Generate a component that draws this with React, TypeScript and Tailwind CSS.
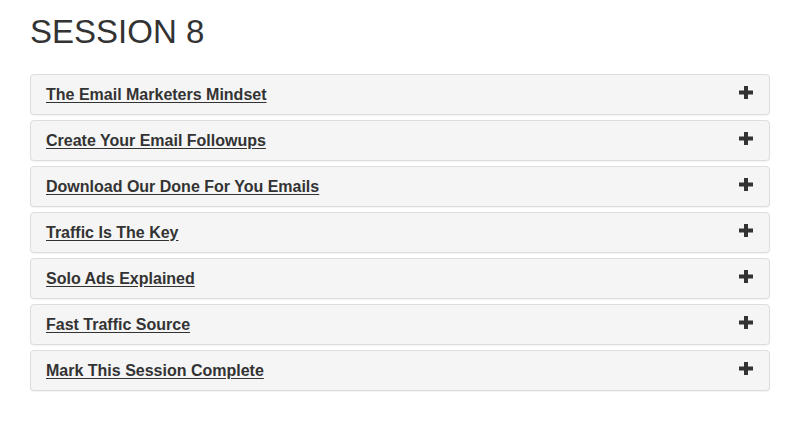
const lessons = [
  'The Email Marketers Mindset',
  'Create Your Email Followups',
  'Download Our Done For You Emails',
  'Traffic Is The Key',
  'Solo Ads Explained',
  'Fast Traffic Source',
  'Mark This Session Complete',
];

function PlusIcon() {
  return (
    <svg width="14" height="13" viewBox="0 0 14 13" className="mb-[4px] block">
      <rect x="5" y="0" width="4" height="13" fill="#333" />
      <rect x="0" y="4.5" width="14" height="4" fill="#333" />
    </svg>
  );
}

export default function App() {
  return (
    <div className="min-h-[421px] w-[806px] bg-white px-[30px] pt-[13px] font-['Liberation_Sans',Arial,sans-serif] text-[#333]">
      <h1 className="text-[33px] leading-[37px] font-normal text-[#333]">SESSION 8</h1>
      <div className="mt-[24px] flex w-[740px] flex-col gap-[5px]">
        {lessons.map((title) => (
          <div
            key={title}
            className="flex h-[41px] items-center justify-between rounded-[4px] border border-[#ddd] bg-[#f5f5f5] pr-[16px] pl-[15px] shadow-[0_1px_1px_rgba(0,0,0,0.05)]"
          >
            <a href="#" className="text-[16px] leading-[18px] font-bold text-[#333] underline underline-offset-[2px]">
              {title}
            </a>
            <PlusIcon />
          </div>
        ))}
      </div>
    </div>
  );
}
